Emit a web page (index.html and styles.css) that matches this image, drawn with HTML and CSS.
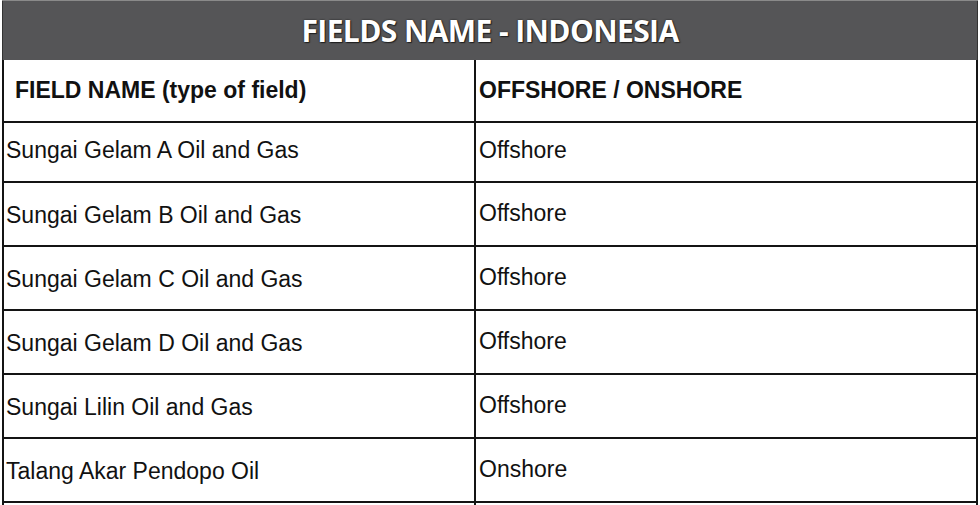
FILE: index.html
```html
<!DOCTYPE html>
<html>
<head>
<meta charset="utf-8">
<link rel="stylesheet" href="styles.css">
</head>
<body>
<div class="sheet">
  <div class="title">FIELDS NAME - INDONESIA</div>
  <table class="fields">
    <colgroup><col class="c1"><col class="c2"></colgroup>
    <thead>
      <tr class="head"><th class="h1">FIELD NAME (type of field)</th><th class="h2">OFFSHORE / ONSHORE</th></tr>
    </thead>
    <tbody>
      <tr class="r first"><td class="name">Sungai Gelam A Oil and Gas</td><td class="kind">Offshore</td></tr>
      <tr class="r"><td class="name">Sungai Gelam B Oil and Gas</td><td class="kind">Offshore</td></tr>
      <tr class="r"><td class="name">Sungai Gelam C Oil and Gas</td><td class="kind">Offshore</td></tr>
      <tr class="r"><td class="name">Sungai Gelam D Oil and Gas</td><td class="kind">Offshore</td></tr>
      <tr class="r"><td class="name">Sungai Lilin Oil and Gas</td><td class="kind">Offshore</td></tr>
      <tr class="r"><td class="name">Talang Akar Pendopo Oil</td><td class="kind">Onshore</td></tr>
      <tr class="r"><td class="name">&nbsp;</td><td class="kind">&nbsp;</td></tr>
    </tbody>
  </table>
</div>
</body>
</html>
```
FILE: styles.css
```css
html, body {
  margin: 0;
  padding: 0;
  background: #ffffff;
  overflow: hidden;
}
.sheet {
  width: 976px;
  margin-left: 2px;
  border-top: 1px solid #8a8a8a;
}
.title {
  height: 59px;
  background: #555557;
  color: #ffffff;
  font-family: "Open Sans", "Liberation Sans", sans-serif;
  font-weight: 700;
  font-size: 30px;
  line-height: 59px;
  text-align: center;
  letter-spacing: -0.6px;
  text-shadow: 0 0 2px #1a1a1a, 1px 1px 1px #222;
  border-left: 1px solid #333;
  border-right: 1px solid #333;
}
.fields {
  width: 976px;
  border-collapse: collapse;
  table-layout: fixed;
  font-family: "Liberation Sans", Arial, sans-serif;
  color: #111111;
}
.c1 { width: 472px; }
.fields th, .fields td {
  border: 2px solid #141414;
  padding: 0 3px;
  text-align: left;
  vertical-align: middle;
}
.fields th {
  font-size: 23px;
  font-weight: 700;
  height: 60px;
  padding-bottom: 1px;
}
.fields th.h1 { padding-left: 11px; }
.fields th.h2 { padding-left: 3px; }
.fields thead tr th { border-top: none; }
.fields td {
  font-size: 23px;
  height: 60px;
  padding-bottom: 2px;
}
.fields td.name { padding-left: 2px; padding-top: 2px; padding-bottom: 0; }
.fields td.kind { padding-left: 3px; }
.fields tr.first td { height: 54px; padding-top: 0; padding-bottom: 4px; }
```
